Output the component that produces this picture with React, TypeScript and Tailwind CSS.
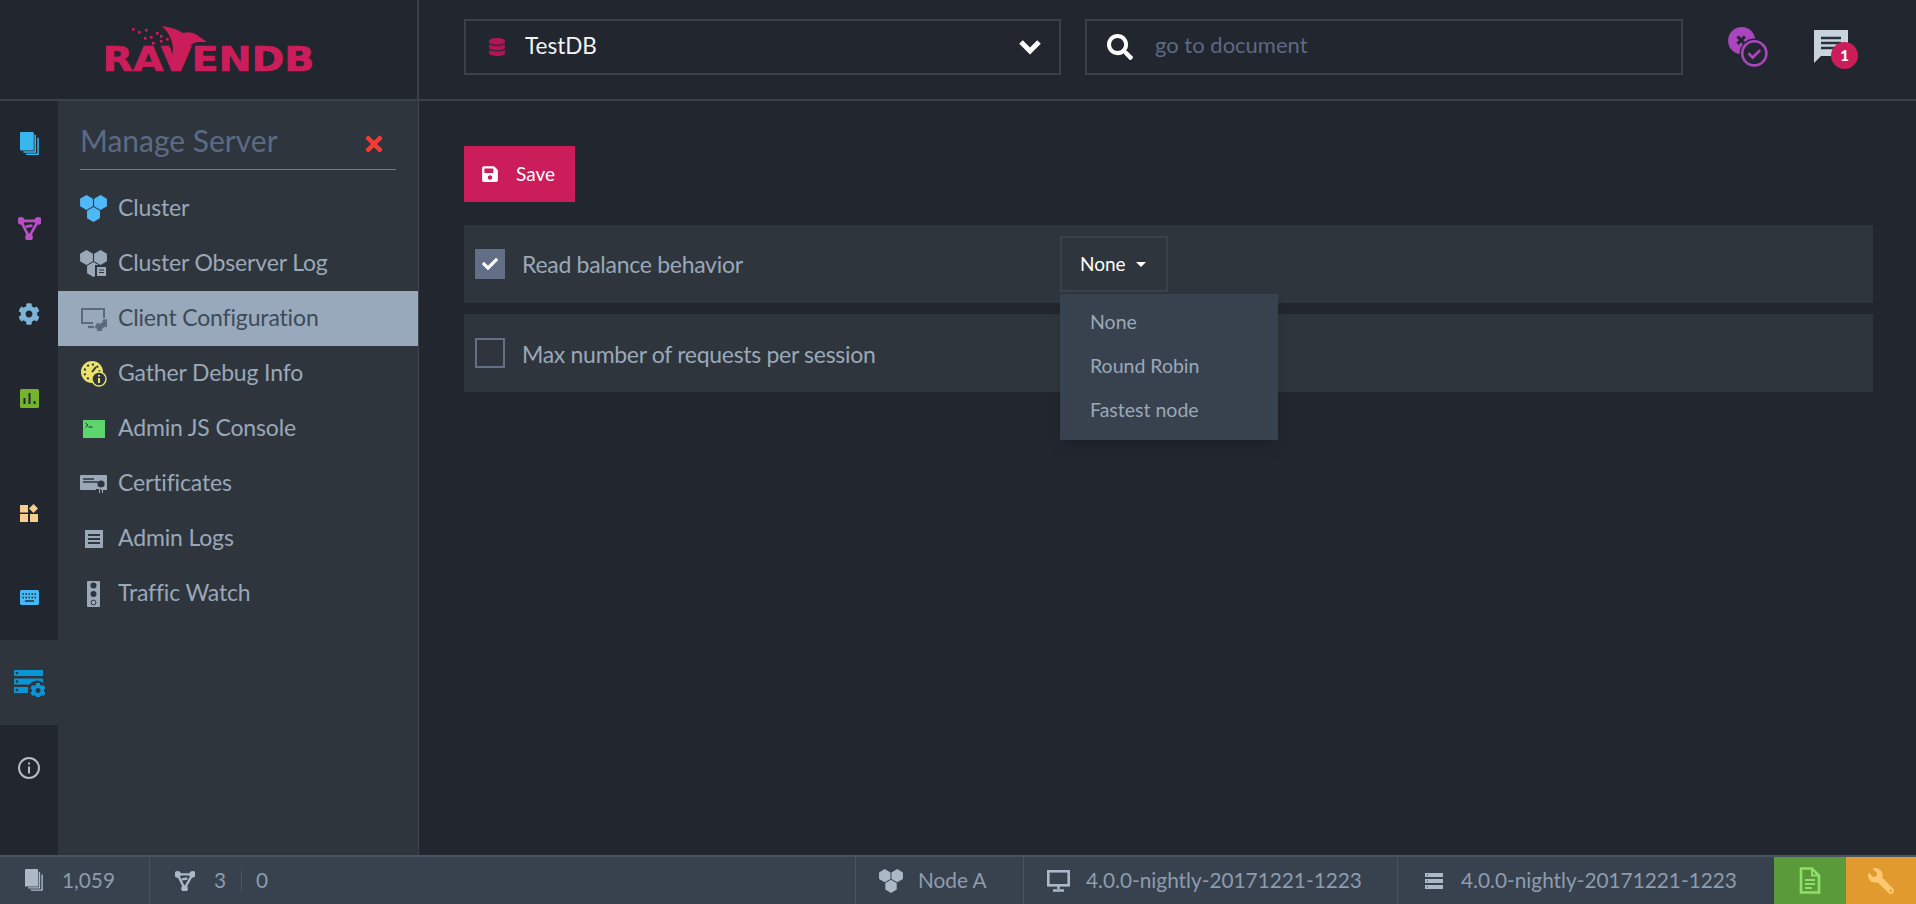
import React from "react";
import {
  FaCheck,
  FaCog,
  FaDatabase,
  FaSave,
  FaSearch,
  FaTimes,
  FaWrench,
} from "react-icons/fa";

const hex = (cx: number, cy: number, r: number) => {
  const h = r * 0.87;
  return `${cx},${cy - r} ${cx + h},${cy - r / 2} ${cx + h},${cy + r / 2} ${cx},${cy + r} ${cx - h},${cy + r / 2} ${cx - h},${cy - r / 2}`;
};

const DocsIcon = ({ main, back, size }: { main: string; back: string; size: number }) => (
  <svg width={size} height={size * 1.25} viewBox="0 0 20 25">
    <path d="M6.5 23.5h12.5V6" fill="none" stroke={back} strokeWidth="1.6" />
    <path d="M3.5 21h12.5V3" fill="none" stroke={back} strokeWidth="1.6" />
    <rect x="0" y="0" width="14.5" height="19.5" rx="1" fill={main} />
  </svg>
);

const IndexIcon = ({ color, size }: { color: string; size: number }) => (
  <svg width={size} height={size} viewBox="0 0 24 24" fill="none" stroke={color} strokeWidth="2.8">
    <path d="M3 4l18 0M3 4l8.5 17M21 4l-9.5 17M8 10l7-1" />
    <circle cx="3" cy="4" r="2.6" fill={color} />
    <circle cx="21" cy="4" r="2.6" fill={color} />
    <circle cx="11.5" cy="21" r="2.6" fill={color} />
  </svg>
);

const ClusterIcon = ({ color, w = 27 }: { color: string; w?: number }) => (
  <svg width={w} height={w} viewBox="0 0 27 27" fill={color}>
    <polygon points={hex(6.5, 7.5, 7.4)} />
    <polygon points={hex(20.5, 7.5, 7.4)} />
    <polygon points={hex(13.5, 19.5, 7.4)} />
  </svg>
);

const ObserverIcon = () => (
  <svg width="27" height="27" viewBox="0 0 27 27" fill="#9aa8b8">
    <polygon points={hex(6.5, 7.5, 7.4)} />
    <polygon points={hex(20.5, 7.5, 7.4)} />
    <polygon points={hex(13.5, 19.5, 7.4)} />
    <rect x="15" y="15" width="13" height="12" fill="#2e353d" />
    <rect x="17" y="17" width="9" height="9" fill="#9aa8b8" />
    <path d="M19 20h5M19 22.5h5" stroke="#2e353d" strokeWidth="1" />
  </svg>
);

const ClientConfigIcon = () => (
  <svg width="27" height="24" viewBox="0 0 27 24" fill="none" stroke="#5c6a7c" strokeWidth="2">
    <path d="M13 16H2V2h22v9" />
    <path d="M8 20h6" strokeWidth="2.4" />
    <FaCog x="14" y="12" width="12" height="12" color="#5c6a7c" stroke="none" />
  </svg>
);

const DebugIcon = () => (
  <svg width="27" height="27" viewBox="0 0 27 27">
    <circle cx="12" cy="12" r="11" fill="#e9e36b" />
    <circle cx="12" cy="12" r="7.5" fill="none" stroke="#2e353d" strokeWidth="2" strokeDasharray="2 3" />
    <path d="M12 12l4-5" stroke="#2e353d" strokeWidth="2" />
    <circle cx="19" cy="19" r="7" fill="#2e353d" stroke="#e9e36b" strokeWidth="1.4" />
    <path d="M19 18v5M19 15v1.6" stroke="#e9e36b" strokeWidth="2" />
  </svg>
);

const ConsoleIcon = () => (
  <svg width="22" height="18" viewBox="0 0 22 18">
    <rect width="22" height="18" fill="#5cd66c" />
    <path d="M2.5 3l2.5 2.2-2.5 2.2" fill="none" stroke="#1d2f26" strokeWidth="1" />
    <path d="M5.5 7h4" stroke="#1d2f26" strokeWidth="1" />
  </svg>
);

const CertIcon = () => (
  <svg width="27" height="19" viewBox="0 0 27 19">
    <path d="M1 1h25a1 1 0 0 1 1 1v14h-6v-1h-5v1H1a1 1 0 0 1-1-1V2a1 1 0 0 1 1-1z" fill="#9aa8b8" />
    <path d="M3 5h11M3 8h15" stroke="#2e353d" strokeWidth="1.4" />
    <circle cx="21" cy="10" r="3.6" fill="#2e353d" />
    <path d="M19.5 13v6M22.5 13v6" stroke="#9aa8b8" strokeWidth="1" />
  </svg>
);

const LogsIcon = () => (
  <svg width="18" height="18" viewBox="0 0 18 18">
    <rect width="18" height="18" fill="#9aa8b8" />
    <path d="M3 5h12M3 9h12M3 13h12" stroke="#2e353d" strokeWidth="1.8" />
  </svg>
);

const TrafficIcon = () => (
  <svg width="13" height="26" viewBox="0 0 13 26">
    <rect width="13" height="26" rx="1" fill="#9aa8b8" />
    <circle cx="6.5" cy="4.5" r="3" fill="#2e353d" />
    <circle cx="6.5" cy="13" r="3" fill="#2e353d" />
    <circle cx="6.5" cy="21.5" r="2.4" fill="none" stroke="#2e353d" />
  </svg>
);

const StatsIcon = () => (
  <svg width="19" height="19" viewBox="0 0 19 19">
    <rect width="19" height="19" rx="1.5" fill="#74b32c" />
    <path d="M4.5 15V9M9.5 15V4M14.5 15v-3" stroke="#22262e" strokeWidth="2" />
  </svg>
);

const TasksIcon = () => (
  <svg width="18" height="18" viewBox="0 0 18 18" fill="#f8cd8e">
    <rect x="0" y="1" width="8" height="7.5" />
    <rect x="0" y="10" width="8" height="8" />
    <rect x="10" y="10" width="8" height="8" />
    <polygon points="13.5,0 18,4.5 13.5,9 9,4.5" />
  </svg>
);

const KeyboardIcon = () => (
  <svg width="19" height="15" viewBox="0 0 19 15">
    <rect width="19" height="15" rx="1.5" fill="#46b8f5" />
    <path d="M2.5 4h14M2.5 7.5h14" stroke="#22262e" strokeWidth="1.3" strokeDasharray="1.5 1.5" />
    <path d="M5 11h9" stroke="#22262e" strokeWidth="1.4" />
  </svg>
);

const ServerCogIcon = () => (
  <svg width="32" height="28" viewBox="0 0 32 28">
    <rect x="1" y="1" width="29" height="6" fill="#0a95d6" />
    <rect x="1" y="9.5" width="29" height="6" fill="#0a95d6" />
    <rect x="1" y="18" width="14" height="6" fill="#0a95d6" />
    <circle cx="4" cy="4" r="1.3" fill="#2e353d" />
    <circle cx="4" cy="12.5" r="1.3" fill="#2e353d" />
    <circle cx="4" cy="21" r="1.3" fill="#2e353d" />
    <circle cx="24" cy="20.5" r="9" fill="#2e353d" />
    <FaCog x="17" y="13.5" width="14" height="14" color="#0a95d6" />
  </svg>
);

const InfoIcon = () => (
  <svg width="22" height="22" viewBox="0 0 22 22" fill="none" stroke="#b4bcc6" strokeWidth="2">
    <circle cx="11" cy="11" r="10" />
    <path d="M11 9.5v7M11 5.5v2" />
  </svg>
);

const particles = [
  [28, 10],
  [34, 13],
  [41, 11],
  [46, 18],
  [52, 14],
  [56, 22],
  [48, 24],
  [62, 20],
  [58, 28],
  [64, 30],
  [56, 17],
  [40, 19],
];

const Logo = () => (
  <svg width="210" height="62" viewBox="0 0 210 62" className="overflow-visible">
    <g fill="#cc1d5b">
      <path d="M58 8Q72 10 79 15Q88 13 93 17L103 24L93 24Q85 26 80 36L73 53L68 39Q72 22 58 8z" />
      {particles.map(([x, y], index) => (
        <rect key={index} x={x} y={y} width="2.6" height="2.6" />
      ))}
      <text
        x="-1.5"
        y="53"
        textLength="212"
        lengthAdjust="spacingAndGlyphs"
        fontFamily="'DejaVu Sans', sans-serif"
        fontWeight="700"
        fontSize="34"
        stroke="#cc1d5b"
        strokeWidth="0.6"
      >
        RAVENDB
      </text>
    </g>
  </svg>
);

const railTop = [
  { icon: <DocsIcon main="#38b6ee" back="#38b6ee" size={19} /> },
  { icon: <IndexIcon color="#b84fc4" size={23} /> },
  { icon: <FaCog size={22} color="#7eb3d8" /> },
  { icon: <StatsIcon /> },
];

const menu = [
  { label: "Cluster", icon: <ClusterIcon color="#4fb8f7" /> },
  { label: "Cluster Observer Log", icon: <ObserverIcon /> },
  { label: "Client Configuration", icon: <ClientConfigIcon />, active: true },
  { label: "Gather Debug Info", icon: <DebugIcon /> },
  { label: "Admin JS Console", icon: <ConsoleIcon /> },
  { label: "Certificates", icon: <CertIcon /> },
  { label: "Admin Logs", icon: <LogsIcon /> },
  { label: "Traffic Watch", icon: <TrafficIcon /> },
];

const App: React.FC = () => {
  return (
    <div className="w-full h-screen flex flex-col overflow-hidden bg-[#22262e] font-['Lato',sans-serif] text-[#9aa8b8]">
      <header className="h-[101px] shrink-0 flex border-b-2 border-[#3a414b]">
        <div className="w-[419px] shrink-0 border-r-2 border-[#3a414b] flex justify-center items-center pl-[1px] pb-[2px]">
          <Logo />
        </div>
        <div className="flex-1 flex items-center pl-[45px] pb-[6px]">
          <div className="w-[597px] h-[56px] border-2 border-[#3a414b] flex items-center pl-[22px] pr-[17px]">
            <FaDatabase size={18} color="#b01657" />
            <span className="ml-[19px] mb-[2px] text-[22.5px] text-[#f2f4f6]">TestDB</span>
            <svg width="24" height="18" viewBox="0 0 24 18" className="ml-auto" fill="none" stroke="#ffffff" strokeWidth="5">
              <path d="M3 4l9 9 9-9" />
            </svg>
          </div>
          <div className="ml-[24px] w-[598px] h-[56px] border-2 border-[#3a414b] flex items-center pl-[20px]">
            <FaSearch size={26} color="#ffffff" />
            <span className="ml-[22px] mb-[4px] text-[22px] text-[#5c6a85]">go to document</span>
          </div>
          <div className="ml-[44px] relative w-[42px] h-[42px]">
            <svg width="42" height="42" viewBox="0 0 40 40">
              <circle cx="14" cy="14" r="13" fill="#a945bd" />
              <path d="M10 10l7 7M17 10l-7 7" stroke="#22262e" strokeWidth="3" />
              <circle cx="26" cy="26" r="14" fill="#22262e" />
              <circle cx="26" cy="26" r="11.5" fill="none" stroke="#a945bd" strokeWidth="2.5" />
              <path d="M20.5 26l4 4 7-7" fill="none" stroke="#a945bd" strokeWidth="2.6" />
            </svg>
          </div>
          <div className="ml-[45px] mt-[8px] relative w-[44px] h-[42px]">
            <svg width="34" height="34" viewBox="0 0 34 34">
              <path d="M0 0h34v26H7l-7 7z" fill="#c9d3dd" />
              <path d="M7 8h20M7 13h20M7 18h14" stroke="#2a3039" strokeWidth="2.6" />
            </svg>
            <span className="absolute left-[17px] top-[12px] w-[27px] h-[27px] rounded-full bg-[#cc1d5b] flex items-center justify-center text-white text-[15px] font-black">
              1
            </span>
          </div>
        </div>
      </header>

      <div className="flex-1 min-h-0 flex">
        <nav className="w-[58px] shrink-0 flex flex-col">
          {railTop.map((item, index) => (
            <div key={index} className="h-[85px] flex items-center justify-center">
              {item.icon}
            </div>
          ))}
          <div className="h-[29px]" />
          <div className="h-[85px] flex items-center justify-center">
            <TasksIcon />
          </div>
          <div className="h-[85px] flex items-center justify-center">
            <KeyboardIcon />
          </div>
          <div className="h-[85px] flex items-center justify-center bg-[#2e353d]">
            <ServerCogIcon />
          </div>
          <div className="h-[85px] flex items-center justify-center">
            <InfoIcon />
          </div>
        </nav>

        <aside className="w-[361px] shrink-0 bg-[#2e353d] border-r border-[#3d444e]">
          <div className="mx-[22px] h-[69px] pt-[17px] flex items-start justify-between border-b border-[#6f7a88] pr-[10px]">
            <span className="text-[30px] leading-[44px] text-[#5c6a85]">Manage Server</span>
            <FaTimes size={24} color="#f43a33" className="mt-[14px]" />
          </div>
          <div className="mt-[11px]">
            {menu.map((item) => (
              <div
                key={item.label}
                className={`h-[55px] flex items-center pl-[22px] text-[23px] tracking-[-0.15px] ${
                  item.active ? "bg-[#99a9bc] text-[#3f4a59]" : ""
                }`}
              >
                <span className="w-[27px] flex justify-center shrink-0">{item.icon}</span>
                <span className="ml-[11px] mb-[3px]">{item.label}</span>
              </div>
            ))}
          </div>
        </aside>

        <main className="flex-1 pl-[45px] pr-[43px] pt-[45px]">
          <button className="w-[111px] h-[56px] bg-[#cc1d5b] text-white text-[19px] flex items-center pl-[17px]">
            <FaSave size={18} />
            <span className="ml-[17px]">Save</span>
          </button>
          <div className="mt-[23px] relative h-[78px] bg-[#2e353d] flex items-center pl-[11px]">
            <div className="w-[30px] h-[30px] bg-[#626f87] flex items-center justify-center">
              <FaCheck size={16} color="#ffffff" />
            </div>
            <span className="ml-[17px] text-[23px] tracking-[-0.28px]">Read balance behavior</span>
            <div className="absolute left-[596px] top-[11px] w-[108px] h-[56px] border-2 border-[#3a414b] bg-[#2e353d] flex items-center pl-[18px] text-[19px] text-white">
              None
              <span className="ml-[10px] w-0 h-0 border-x-[5px] border-x-transparent border-t-[5px] border-t-white" />
            </div>
            <div className="absolute z-10 left-[596px] top-[69px] w-[218px] h-[146px] bg-[#38424e] shadow-lg pt-[6px] text-[19.5px]">
              <div className="h-[44px] flex items-center pl-[30px]">None</div>
              <div className="h-[44px] flex items-center pl-[30px]">Round Robin</div>
              <div className="h-[44px] flex items-center pl-[30px]">Fastest node</div>
            </div>
          </div>
          <div className="mt-[11px] h-[78px] bg-[#2e353d] flex items-center pl-[11px]">
            <div className="w-[30px] h-[30px] border-2 border-[#626f87]" />
            <span className="ml-[17px] mt-[3px] text-[23px] tracking-[-0.3px]">Max number of requests per session</span>
          </div>
        </main>
      </div>

      <footer className="h-[49px] shrink-0 bg-[#38424e] border-t-2 border-[#4a5360] flex items-center text-[20.8px] text-[#8d9cae]">
        <div className="w-[150px] h-full border-r border-[#4a5360] flex items-center pl-[25px]">
          <DocsIcon main="#aab8c8" back="#aab8c8" size={18} />
          <span className="ml-[19px] mb-[2px]">1,059</span>
        </div>
        <div className="flex items-center pl-[25px]">
          <IndexIcon color="#aab8c8" size={20} />
          <span className="ml-[19px] mb-[2px]">3</span>
          <span className="ml-[15px] w-px h-[20px] bg-[#4f5a67]" />
          <span className="ml-[14px] mb-[2px]">0</span>
        </div>
        <div className="ml-auto flex h-full items-center">
          <div className="h-full w-[168px] border-l border-[#4a5360] flex items-center pl-[23px]">
            <ClusterIcon color="#aab8c8" w={24} />
            <span className="ml-[15px] mb-[2px]">Node A</span>
          </div>
          <div className="h-full w-[374px] border-l border-[#4a5360] flex items-center pl-[23px]">
            <svg width="23" height="22" viewBox="0 0 23 22" fill="none" stroke="#aab8c8" strokeWidth="2.6">
              <rect x="1.3" y="1.3" width="20.4" height="14" />
              <path d="M11.5 15v4M6 20.5h11" />
            </svg>
            <span className="ml-[16px] mb-[2px]">4.0.0-nightly-20171221-1223</span>
          </div>
          <div className="h-full w-[377px] border-l border-[#4a5360] flex items-center pl-[27px]">
            <svg width="18" height="16" viewBox="0 0 18 16" fill="#aab8c8">
              <rect width="18" height="4" />
              <rect y="6" width="18" height="4" />
              <rect y="12" width="18" height="4" />
              <path d="M2 2h1M2 8h1M2 14h1" stroke="#38424e" />
            </svg>
            <span className="ml-[18px] mb-[2px]">4.0.0-nightly-20171221-1223</span>
          </div>
          <div className="h-full w-[72px] bg-[#5b9a3b] flex items-center justify-center">
            <svg width="22" height="27" viewBox="0 0 22 27" fill="none" stroke="#8fe069" strokeWidth="2.6">
              <path d="M2 1.5h11l7 7v17H2z" />
              <path d="M13 1.5v7h7M6 13h10M6 17h10M6 21h7" strokeWidth="2" />
            </svg>
          </div>
          <div className="h-full w-[70px] bg-[#e09a2e] flex items-center justify-center">
            <FaWrench size={26} color="#ffc870" className="-scale-x-100" />
          </div>
        </div>
      </footer>
    </div>
  );
};

export default App;
